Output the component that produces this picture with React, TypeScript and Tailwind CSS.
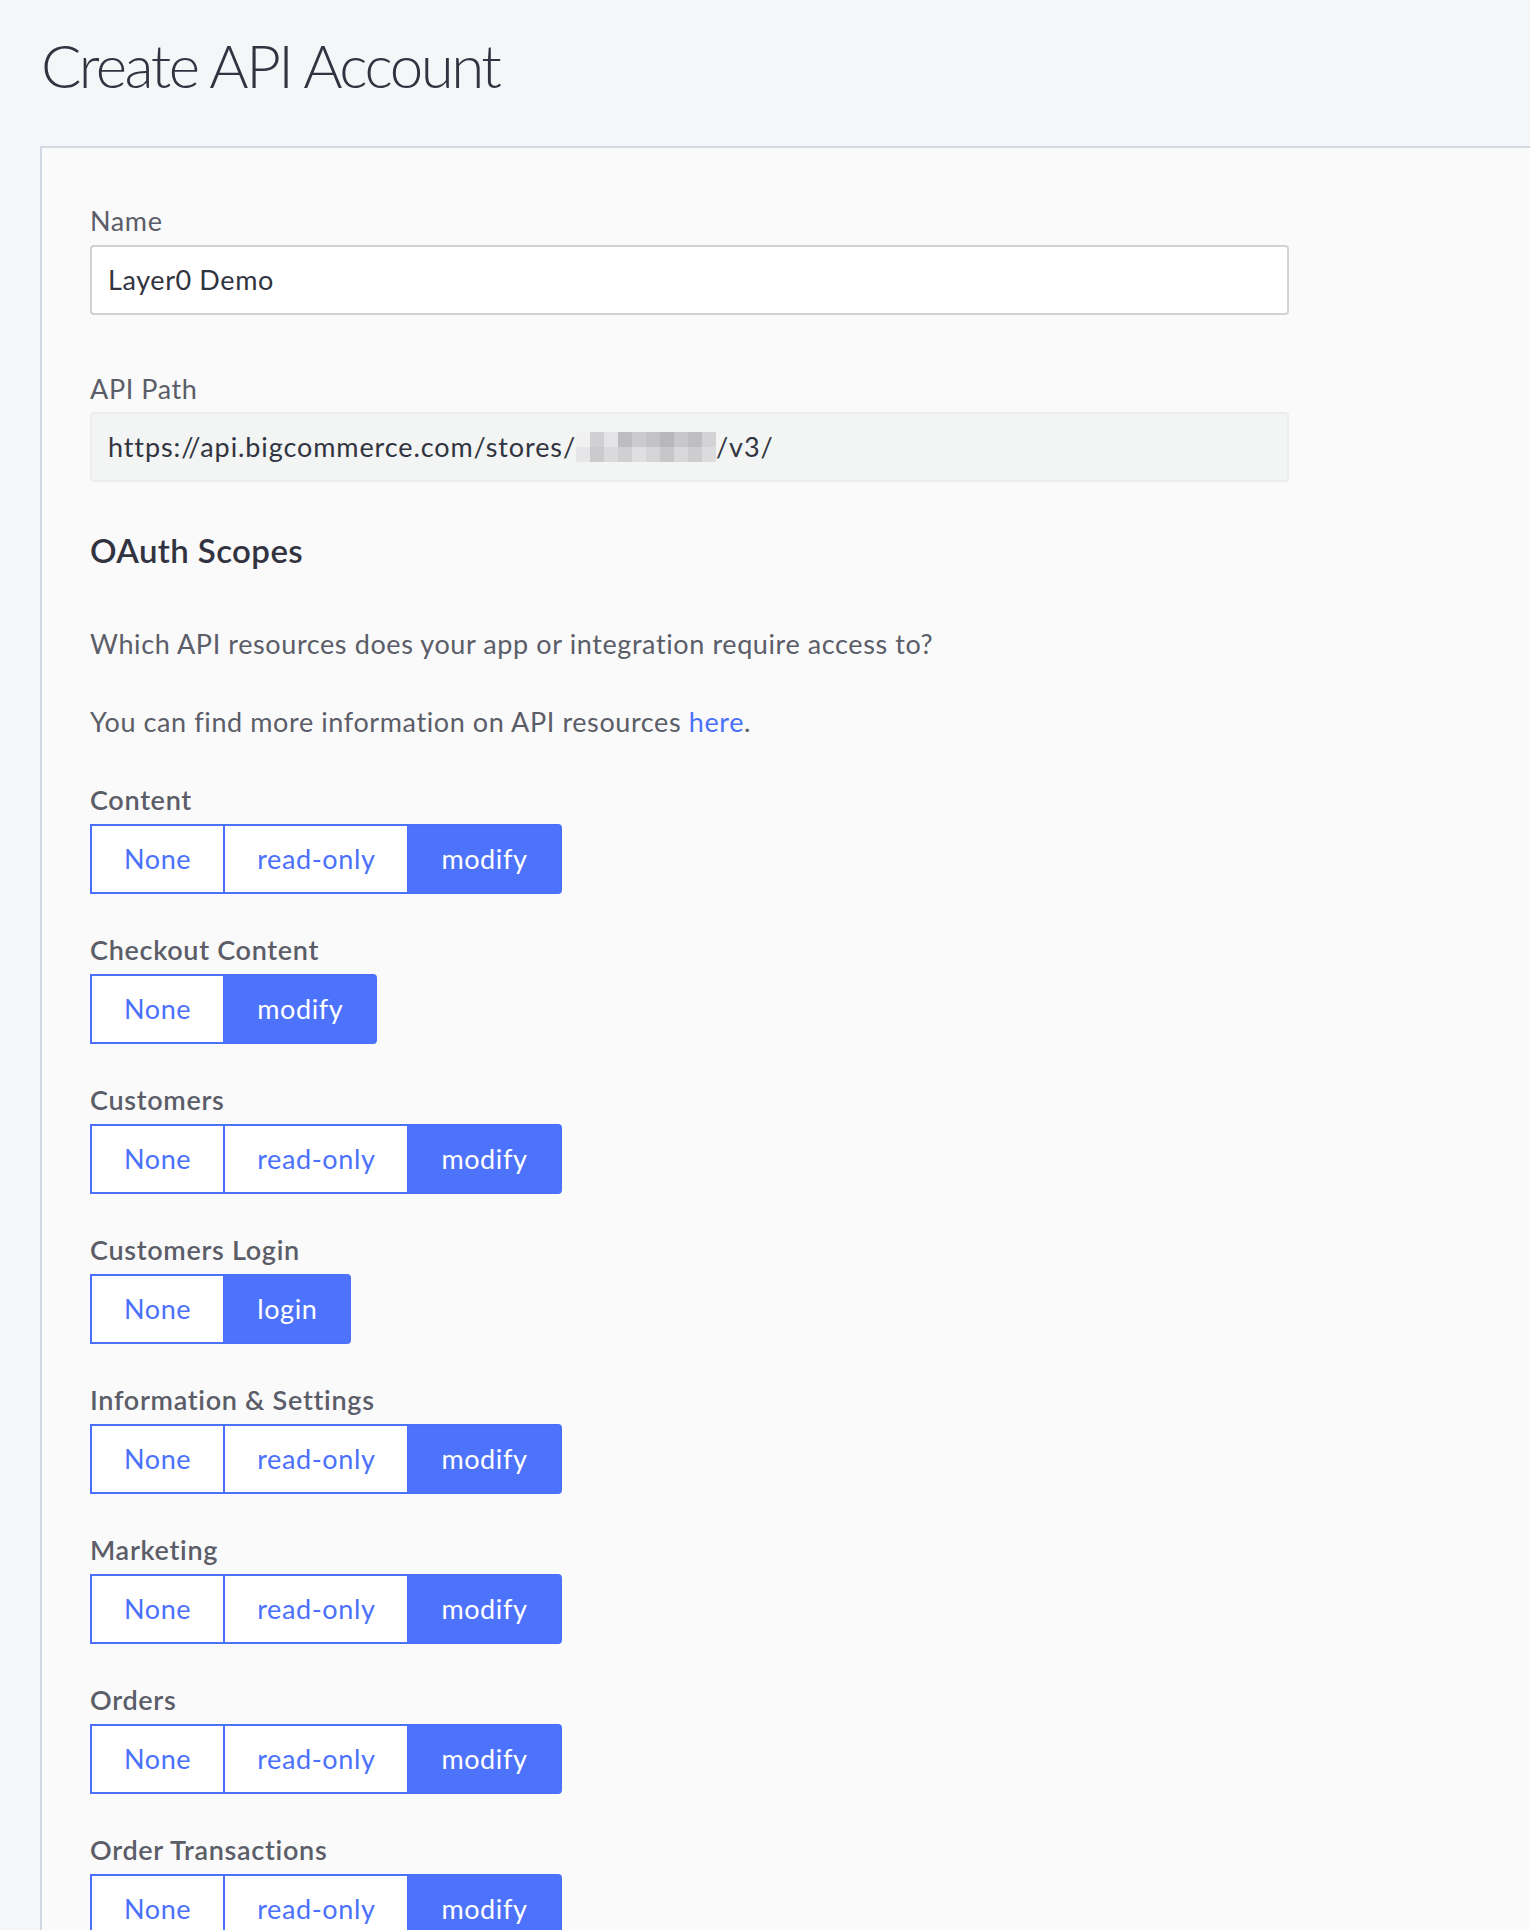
import React from 'react'

type Scope = {
  label: string
  options: string[]
  selected: string
}

const scopes: Scope[] = [
  { label: 'Content', options: ['None', 'read-only', 'modify'], selected: 'modify' },
  { label: 'Checkout Content', options: ['None', 'modify'], selected: 'modify' },
  { label: 'Customers', options: ['None', 'read-only', 'modify'], selected: 'modify' },
  { label: 'Customers Login', options: ['None', 'login'], selected: 'login' },
  { label: 'Information & Settings', options: ['None', 'read-only', 'modify'], selected: 'modify' },
  { label: 'Marketing', options: ['None', 'read-only', 'modify'], selected: 'modify' },
  { label: 'Orders', options: ['None', 'read-only', 'modify'], selected: 'modify' },
  { label: 'Order Transactions', options: ['None', 'read-only', 'modify'], selected: 'modify' },
]

// pixelated store hash, blurred out in the original
const mosaic = [
  ['#f1f1f2', '#d0d0d3', '#e4e4e6', '#bdbdc1', '#cbcbce', '#c3c3c6', '#b8b8bc', '#c8c8cb', '#bfbfc2', '#d3d3d5'],
  ['#e6e6e8', '#cbcbce', '#dadadc', '#d0d0d3', '#dfdfe1', '#d5d5d7', '#c7c7ca', '#d8d8da', '#cdcdd0', '#dcdcde'],
]

const ScopeGroup: React.FC<{ scope: Scope }> = ({ scope }) => (
  <div className="flex flex-col">
    <div className="text-[27px] leading-[34px] tracking-[0.7px] font-semibold text-[#5b5d68] mb-[7px]">{scope.label}</div>
    <div className="flex">
      {scope.options.map((opt, i) => {
        const active = opt === scope.selected
        const last = i === scope.options.length - 1
        return (
          <button
            key={opt}
            className={
              'h-[70px] px-[32px] text-[27px] tracking-[0.6px] border-y-2 border-l-2 border-[#4b71fc] ' +
              (active ? 'bg-[#4d73fc] text-white ' : 'bg-white text-[#4b71fc] ') +
              (last ? 'border-r-2 rounded-r-[4px]' : '')
            }
          >
            {opt}
          </button>
        )
      })}
    </div>
  </div>
)

export default function App() {
  return (
    <div className="min-h-screen bg-[#f5f6f8] pt-[34px] font-['Lato',sans-serif] overflow-hidden">
      <h1 className="pl-[41px] text-[60px] leading-[62px] font-light text-[#313440] tracking-[-2.5px]">
        Create API Account
      </h1>

      <div className="mt-[50px] ml-[40px] border-t-2 border-l-2 border-[#d3d9e2] bg-[#fafafa] pl-[48px] pt-[56px] pb-[80px] tracking-[0.6px]">
        {/* Name */}
        <label className="block text-[27px] leading-[34px] text-[#5b5d68] mb-[7px]">Name</label>
        <div className="w-[1199px] h-[70px] bg-white border-2 border-[#d2d2d2] rounded-[4px] flex items-center px-[16px] text-[27px] text-[#313440]">
          Layer0 Demo
        </div>

        {/* API Path */}
        <label className="block mt-[57px] text-[27px] leading-[34px] text-[#5b5d68] mb-[6px]">API Path</label>
        <div className="w-[1199px] h-[70px] bg-[#f3f4f4] border-2 border-[#ebeded] rounded-[4px] flex items-center px-[16px] text-[27px] tracking-[0.9px] text-[#313440]">
          <span>https://api.bigcommerce.com/stores/</span>
          <span className="inline-flex flex-col">
            {mosaic.map((row, r) => (
              <span key={r} className="flex">
                {row.map((c, k) => (
                  <span key={k} className="w-[14px] h-[15px]" style={{ backgroundColor: c }} />
                ))}
              </span>
            ))}
          </span>
          <span>/v3/</span>
        </div>

        {/* OAuth Scopes */}
        <h2 className="mt-[46px] text-[33px] leading-[44px] tracking-[0.4px] font-semibold text-[#313440]">OAuth Scopes</h2>
        <p className="mt-[55px] text-[27px] leading-[34px] text-[#5b5d68]">
          Which API resources does your app or integration require access to?
        </p>
        <p className="mt-[44px] text-[27px] leading-[34px] text-[#5b5d68]">
          You can find more information on API resources <a className="text-[#4b71fc]">here</a>.
        </p>

        <div className="mt-[44px] flex flex-col gap-[39px]">
          {scopes.map((s) => (
            <ScopeGroup key={s.label} scope={s} />
          ))}
        </div>
      </div>
    </div>
  )
}
